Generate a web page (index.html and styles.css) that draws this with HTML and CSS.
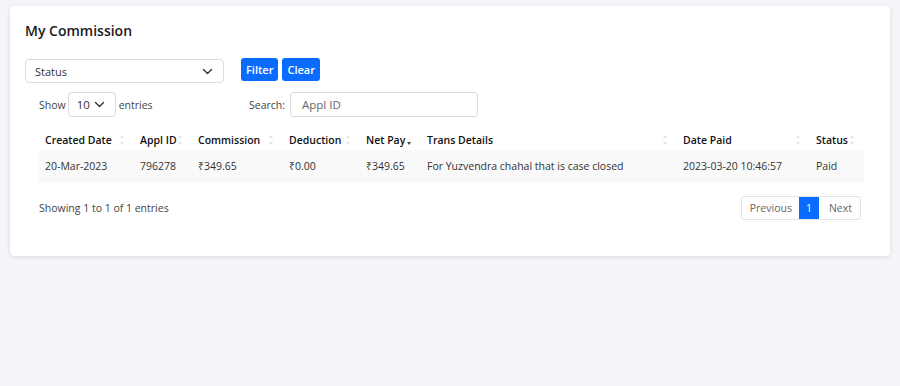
FILE: index.html
```html
<!DOCTYPE html>
<html lang="en">
<head>
    <meta charset="UTF-8">
    <meta name="viewport" content="width=device-width, initial-scale=1.0">
    <title>My Commission</title>
    <link rel="stylesheet" href="styles.css">
</head>
<body>

    <div class="card">
        <h4 class="card-title">My Commission</h4>

        <!-- filtros -->
        <div class="filters">
            <div class="select status-select">
                <span>Status</span>
                <svg width="11" height="7" viewBox="0 0 11 7"><path d="M1.5 1.5 5.5 5.5l4-4" fill="none" stroke="#333" stroke-width="1.4" stroke-linecap="round" stroke-linejoin="round"/></svg>
            </div>
            <button class="btn">Filter</button>
            <button class="btn">Clear</button>
        </div>

        <div class="table-top">
            <div class="length">
                Show
                <div class="select length-select">
                    <span>10</span>
                    <svg width="11" height="7" viewBox="0 0 11 7"><path d="M1.5 1.5 5.5 5.5l4-4" fill="none" stroke="#333" stroke-width="1.4" stroke-linecap="round" stroke-linejoin="round"/></svg>
                </div>
                entries
            </div>
            <div class="search">
                Search:
                <input type="text" placeholder="Appl ID">
            </div>
        </div>

        <table class="data-table">
            <colgroup>
                <col style="width:95px">
                <col style="width:58px">
                <col style="width:91px">
                <col style="width:77px">
                <col style="width:61px">
                <col style="width:256px">
                <col style="width:133px">
                <col style="width:54px">
            </colgroup>
            <thead>
                <tr>
                    <th>Created Date<i class="sort"></i></th>
                    <th>Appl ID<i class="sort"></i></th>
                    <th>Commission<i class="sort"></i></th>
                    <th>Deduction<i class="sort"></i></th>
                    <th>Net Pay<i class="sort desc"></i></th>
                    <th>Trans Details<i class="sort"></i></th>
                    <th>Date Paid<i class="sort"></i></th>
                    <th>Status<i class="sort"></i></th>
                </tr>
            </thead>
            <tbody>
                <tr>
                    <td>20-Mar-2023</td>
                    <td>796278</td>
                    <td>₹349.65</td>
                    <td>₹0.00</td>
                    <td>₹349.65</td>
                    <td>For Yuzvendra chahal that is case closed</td>
                    <td>2023-03-20 10:46:57</td>
                    <td>Paid</td>
                </tr>
            </tbody>
        </table>

        <div class="table-bottom">
            <div class="info">Showing 1 to 1 of 1 entries</div>
            <div class="pagination">
                <span class="page">Previous</span>
                <span class="page active">1</span>
                <span class="page">Next</span>
            </div>
        </div>
    </div>

</body>
</html>
```

FILE: styles.css
```css
body {
    font-family: "Open Sans", "Noto Sans", sans-serif;
    background-color: #f5f5f9;
    margin: 0;
    padding: 6px 10px;
    color: #222;
}

.card {
    background-color: #fff;
    border-radius: 4px;
    box-shadow: 0 1px 4px rgba(50, 60, 100, 0.15);
    padding: 16px 15px 0 15px;
    box-sizing: content-box;
    height: 234px;
}

.card-title {
    margin: 0;
    font-size: 14px;
    font-weight: 600;
    line-height: 18px;
    color: #1b1b1b;
}

.filters {
    display: flex;
    align-items: flex-start;
    margin-top: 18px;
}

.select {
    display: flex;
    align-items: center;
    justify-content: space-between;
    box-sizing: border-box;
    border: 1px solid #dcdcdc;
    border-radius: 4px;
    background: #fff;
    font-size: 11px;
    color: #333;
}

.status-select {
    width: 199px;
    height: 24px;
    padding: 0 10px 0 9px;
    margin-right: 17px;
    margin-top: 1px;
}

.btn {
    height: 23px;
    padding: 0 5px;
    margin-right: 4px;
    border: none;
    border-radius: 3px;
    background-color: #0a6cff;
    color: #fff;
    font-family: inherit;
    font-size: 11px;
    font-weight: 600;
    cursor: pointer;
}

.table-top {
    display: flex;
    align-items: center;
    margin-top: 9px;
    padding-left: 14px;
    font-size: 10.5px;
    color: #444;
}

.length {
    display: flex;
    align-items: center;
    width: 210px;
}

.length-select {
    width: 48px;
    height: 25px;
    padding: 0 10px 0 8px;
    margin: 0 3px 0 2px;
    font-size: 11.5px;
}

.search {
    display: flex;
    align-items: center;
}

.search input {
    width: 188px;
    height: 25px;
    box-sizing: border-box;
    margin-left: 5px;
    border: 1px solid #dcdcdc;
    border-radius: 3px;
    padding: 0 11px;
    font-family: inherit;
    font-size: 11.5px;
}

.search input::placeholder {
    color: #666;
}

.data-table {
    margin-top: 12px;
    margin-left: 14px;
    border-collapse: collapse;
    table-layout: fixed;
    width: 825px;
    font-size: 10.5px;
}

.data-table th {
    position: relative;
    text-align: left;
    font-weight: 600;
    color: #111;
    padding: 0 6px;
    height: 21px;
    white-space: nowrap;
}

.data-table td {
    padding: 0 6px 2px 6px;
    height: 31px;
    color: #333;
    background-color: #f9f9f9;
    white-space: nowrap;
}

/* icones de ordenação */
.sort {
    position: absolute;
    right: 9px;
    top: 6px;
    width: 5px;
    height: 10px;
}

.sort::before, .sort::after {
    content: "";
    position: absolute;
    left: 0;
    border-left: 2.5px solid transparent;
    border-right: 2.5px solid transparent;
}

.sort::before {
    top: 0;
    border-bottom: 3px solid #e2e2e2;
}

.sort::after {
    bottom: 0;
    border-top: 3px solid #e2e2e2;
}

.sort.desc::before {
    border-bottom-color: transparent;
}

.sort.desc::after {
    border-top-color: #444;
}

.table-bottom {
    display: flex;
    align-items: center;
    justify-content: space-between;
    margin-top: 13px;
    padding-left: 14px;
    padding-right: 14px;
}

.info {
    font-size: 10.5px;
    color: #444;
}

.pagination {
    display: flex;
    border: 1px solid #e3e3e3;
    border-radius: 3px;
    overflow: hidden;
}

.page {
    height: 22px;
    line-height: 22px;
    padding: 0 8px 0 10px;
    font-size: 10.5px;
    color: #666;
}

.page:first-child {
    padding: 0 7px 0 8px;
}

.page.active {
    background-color: #0a6cff;
    color: #fff;
    padding: 0 7px;
}
```
